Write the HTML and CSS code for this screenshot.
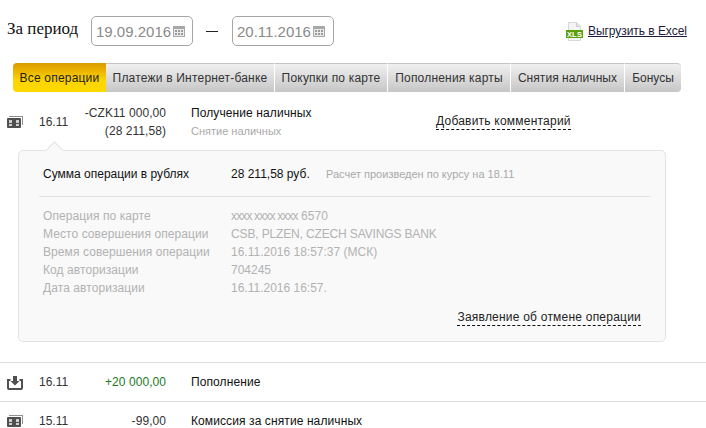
FILE: index.html
```html
<!DOCTYPE html>
<html lang="ru">
<head>
<meta charset="utf-8">
<title>Операции</title>
<link rel="stylesheet" href="styles.css">
</head>
<body>
<div class="filter">
  <span class="period">За период</span>
  <div class="date"><span>19.09.2016</span><svg class="cal" width="12" height="11" viewBox="0 0 12 11"><rect width="12" height="11" fill="#a8a8a8"/><rect x="1" y="3" width="10" height="7" fill="#ececec"/><path d="M2 4h2v2H2zM5 4h2v2H5zM8 4h2v2H8zM2 7h2v2H2zM5 7h2v2H5zM8 7h2v2H8z" fill="#9a9a9a"/></svg></div>
  <span class="dash"></span>
  <div class="date"><span>20.11.2016</span><svg class="cal" width="12" height="11" viewBox="0 0 12 11"><rect width="12" height="11" fill="#a8a8a8"/><rect x="1" y="3" width="10" height="7" fill="#ececec"/><path d="M2 4h2v2H2zM5 4h2v2H5zM8 4h2v2H8zM2 7h2v2H2zM5 7h2v2H5zM8 7h2v2H8z" fill="#9a9a9a"/></svg></div>
  <a class="excel" href="#">
    <svg width="17" height="19" viewBox="0 0 17 19"><path d="M2.500.5h8l4 4v14h-12z" fill="#f4f4f4" stroke="#d8d8d8"/><path d="M10.500.5v4h4" fill="#e2e2e2" stroke="#cfcfcf"/><rect y="8" width="17" height="8" fill="#5b9e0a"/><text class="xls" x="8.500" y="15">XLS</text></svg>
    <span>Выгрузить в Excel</span>
  </a>
</div>

<nav class="tabs">
  <a class="tab active t1" href="#">Все операции</a>
  <a class="tab t2" href="#">Платежи в Интернет-банке</a>
  <a class="tab t3" href="#">Покупки по карте</a>
  <a class="tab t4" href="#">Пополнения карты</a>
  <a class="tab t5" href="#">Снятия наличных</a>
  <a class="tab t6" href="#">Бонусы</a>
</nav>

<div class="op first">
  <svg class="icon" width="16" height="12" viewBox="0 0 16 12"><path d="M2 0h14v9h-1V1H2z" fill="#8f8f8f"/><rect y="2" width="14" height="10" rx="1" fill="#505050"/><path d="M2 4h3v3H2zM9 4h3v3H9zM2 8h3v2H2zM9 8h3v2H9z" fill="#cfcfcf"/></svg>
  <span class="day">16.11</span>
  <div class="amount">-CZK11 000,00<br>(28 211,58)</div>
  <div class="name">Получение наличных<small>Снятие наличных</small></div>
  <a class="dashed comment" href="#">Добавить комментарий</a>
</div>

<section class="panel">
  <div class="summary">
    <span class="k">Сумма операции в рублях</span>
    <span class="v">28 211,58 руб.</span>
    <span class="note">Расчет произведен по курсу на 18.11</span>
  </div>
  <dl class="details">
    <dt>Операция по карте</dt><dd><span class="mask">xxxx xxxx xxxx</span> 6570</dd>
    <dt>Место совершения операции</dt><dd class="tight">CSB, PLZEN, CZECH SAVINGS BANK</dd>
    <dt>Время совершения операции</dt><dd>16.11.2016 18:57:37 (МСК)</dd>
    <dt>Код авторизации</dt><dd>704245</dd>
    <dt>Дата авторизации</dt><dd>16.11.2016 16:57.</dd>
  </dl>
  <div class="cancel"><a class="dashed" href="#">Заявление об отмене операции</a></div>
</section>

<div class="op line">
  <svg class="icon" width="16" height="15" viewBox="0 0 16 15"><path d="M3.500 5H1v8a1 1 0 0 0 1 1h12a1 1 0 0 0 1-1V5h-2.500" fill="none" stroke="#505050" stroke-width="2"/><path d="M6 1h4v5h2.500L8 10.500 3.500 6H6z" fill="#505050"/></svg>
  <span class="day">16.11</span>
  <div class="amount plus">+20 000,00</div>
  <div class="name">Пополнение</div>
</div>
<div class="op line">
  <svg class="icon" width="16" height="12" viewBox="0 0 16 12"><path d="M2 0h14v9h-1V1H2z" fill="#8f8f8f"/><rect y="2" width="14" height="10" rx="1" fill="#505050"/><path d="M2 4h3v3H2zM9 4h3v3H9zM2 8h3v2H2zM9 8h3v2H9z" fill="#cfcfcf"/></svg>
  <span class="day">15.11</span>
  <div class="amount">-99,00</div>
  <div class="name">Комиссия за снятие наличных</div>
</div>
</body>
</html>
```

FILE: styles.css
```css
* { box-sizing: border-box; }
html, body { margin: 0; padding: 0; }
body {
  width: 706px;
  height: 428px;
  overflow: hidden;
  background: #fff;
  color: #1a1a1a;
  font: 12px/18px "Liberation Sans", Arial, sans-serif;
}
a { color: inherit; text-decoration: none; }

.filter {
  display: flex;
  align-items: center;
  height: 30px;
  margin-top: 16px;
  padding: 0 19px 0 7px;
}
.period {
  width: 84px;
  font: 17px/20px "Liberation Serif", serif;
  color: #111;
  position: relative;
  top: -2px;
}
.date {
  display: flex;
  align-items: center;
  gap: 2px;
  width: 102px;
  height: 30px;
  padding: 1px 0 0 4px;
  border: 1px solid #a6a6a6;
  border-radius: 5px;
  font-size: 15px;
  color: #8a8a8a;
}
.cal { margin-top: -1px; }
.dash {
  width: 12px;
  height: 1px;
  margin: 0 14px 0 13px;
  background: #222;
}
.excel {
  display: flex;
  align-items: center;
  gap: 5px;
  margin-left: auto;
  letter-spacing: -.05px;
}
.excel span {
  color: #1c1c3a;
  text-decoration: underline;
}
.xls {
  font: bold 7.500px "Liberation Sans", Arial, sans-serif;
  letter-spacing: .2px;
  text-anchor: middle;
  fill: #fff;
}

.tabs {
  display: flex;
  height: 29px;
  margin: 17px 0 0 13px;
  width: 668px;
  border-radius: 4px;
  color: #333;
}
.tab {
  display: flex;
  align-items: center;
  justify-content: center;
  border-top: 1px solid #c4c4c4;
  border-right: 1px solid #fff;
  background: linear-gradient(#f0f0f0, #c6c6c6);
  letter-spacing: .2px;
}
.tab:last-child { border-right: 0; border-radius: 0 4px 4px 0; }
.t1 { width: 93px; }
.t2 { width: 169px; }
.t3 { width: 113px; }
.t4 { width: 123px; }
.t5 { width: 114px; letter-spacing: .06px; }
.t6 { width: 56px; letter-spacing: 0; }
.tab.active {
  color: #222;
  border-top-color: #d99e00;
  border-right: 0;
  border-radius: 4px 0 0 4px;
  background: linear-gradient(#dc9d00, #ffd500 60%, #ffd900);
}

.op {
  display: grid;
  grid-template-columns: 32px 40px 87px auto;
  align-items: center;
  padding-left: 7px;
  color: #1a1a1a;
}
.first { position: relative; height: 38px; margin-top: 11px; }
.line { height: 39px; border-top: 1px solid #dedede; }
.day { color: #333; }
.amount { text-align: right; color: #333; letter-spacing: .06px; }
.plus { color: #1d7a1d; }
.name { margin-left: 25px; color: #111; letter-spacing: .1px; }
.name small {
  display: block;
  font-size: 11px;
  letter-spacing: 0;
  color: #a9a9a9;
}
.dashed {
  color: #222;
  border-bottom: 1px dashed #111;
  letter-spacing: .22px;
}
.comment {
  position: absolute;
  left: 436px;
  top: 9px;
  height: 18px;
}

.panel {
  position: relative;
  width: 648px;
  height: 192px;
  margin: 9px 0 20px 18px;
  padding: 12px 14px 0 20px;
  border: 1px solid #e3e3e3;
  border-radius: 5px;
  background: #f9f9f9;
}
.panel::before {
  content: "";
  position: absolute;
  left: 29px;
  top: -7px;
  width: 12px;
  height: 12px;
  background: #f9f9f9;
  border: solid #e3e3e3;
  border-width: 1px 0 0 1px;
  transform: rotate(45deg);
}
.summary {
  display: grid;
  grid-template-columns: 188px 95px auto;
  align-items: center;
  height: 33px;
  padding: 0 4px 11px;
  color: #111;
}
.note { font-size: 11px; color: #a9a9a9; }
.details {
  display: grid;
  grid-template-columns: 188px auto;
  margin: 0;
  padding: 10px 4px 0;
  border-top: 1px solid #e3e3e3;
  color: #b2b2b2;
}
.details dt, .details dd { margin: 0; }
.details dt { letter-spacing: .08px; }
.mask { letter-spacing: -.85px; }
.tight { letter-spacing: -.14px; }
.cancel {
  display: flex;
  justify-content: flex-end;
  margin-top: 11px;
  padding-right: 10px;
}
.cancel a { height: 18px; }
```
